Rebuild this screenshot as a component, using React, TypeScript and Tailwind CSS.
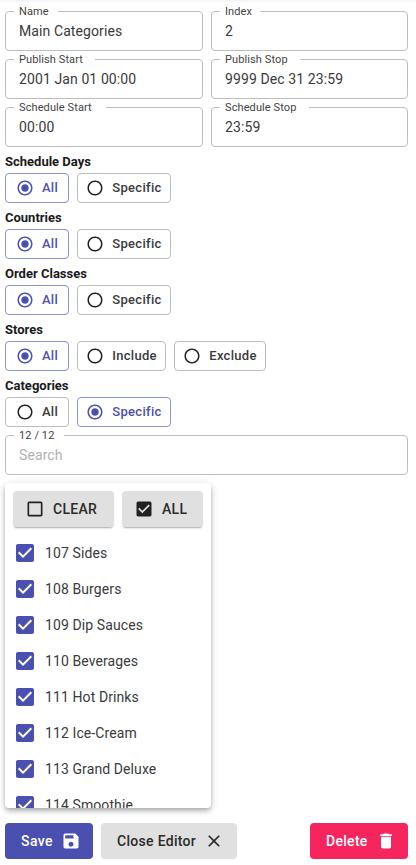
const ROBOTO = "font-['Roboto',sans-serif]";

const Icon = ({ d, className }: { d: string; className: string }) => (
  <svg viewBox="0 0 24 24" className={className} fill="currentColor">
    <path d={d} />
  </svg>
);

const RADIO_OFF =
  'M12 2C6.48 2 2 6.48 2 12s4.48 10 10 10 10-4.48 10-10S17.52 2 12 2zm0 18c-4.42 0-8-3.58-8-8s3.58-8 8-8 8 3.58 8 8-3.58 8-8 8z';
const RADIO_ON =
  'M12 7c-2.76 0-5 2.24-5 5s2.24 5 5 5 5-2.24 5-5-2.24-5-5-5zm0-5C6.48 2 2 6.48 2 12s4.48 10 10 10 10-4.48 10-10S17.52 2 12 2zm0 18c-4.42 0-8-3.58-8-8s3.58-8 8-8 8 3.58 8 8-3.58 8-8 8z';
const CHECKED =
  'M19 3H5c-1.11 0-2 .9-2 2v14c0 1.1.89 2 2 2h14c1.11 0 2-.9 2-2V5c0-1.1-.89-2-2-2zm-9 14l-5-5 1.41-1.41L10 14.17l7.59-7.59L19 8l-9 9z';
const UNCHECKED =
  'M19 5v14H5V5h14m0-2H5c-1.1 0-2 .9-2 2v14c0 1.1.9 2 2 2h14c1.1 0 2-.9 2-2V5c0-1.1-.9-2-2-2z';
const SAVE =
  'M17 3H5c-1.11 0-2 .9-2 2v14c0 1.1.89 2 2 2h14c1.1 0 2-.9 2-2V7l-4-4zm-5 16c-1.66 0-3-1.34-3-3s1.34-3 3-3 3 1.34 3 3-1.34 3-3 3zm3-10H5V5h10v4z';
const CLOSE =
  'M19 6.41L17.59 5 12 10.59 6.41 5 5 6.41 10.59 12 5 17.59 6.41 19 12 13.41 17.59 19 19 17.59 13.41 12z';
const DELETE =
  'M6 19c0 1.1.9 2 2 2h8c1.1 0 2-.9 2-2V7H6v12zM19 4h-3.5l-1-1h-5l-1 1H5v2h14V4z';

const Field = ({
  label,
  value,
  placeholder,
  notch,
  className,
}: {
  label: string;
  value?: string;
  placeholder?: string;
  notch: string;
  className?: string;
}) => (
  <div className={`relative h-10 rounded border border-[#bdbdbd] px-[13px] flex items-center ${className ?? ''}`}>
    <span className={`absolute left-[8px] -top-[7px] bg-white pl-[5px] text-[11px] tracking-[0.1px] leading-[13px] text-[#424242] ${notch}`}>
      {label}
    </span>
    <span className={`text-[14px] tracking-[0.1px] pt-[1px] ${placeholder ? 'text-[#b0b0b0]' : 'text-[#3a3a3a]'}`}>
      {value ?? placeholder}
    </span>
  </div>
);

const Toggle = ({ label, active, width }: { label: string; active?: boolean; width: string }) => (
  <div
    className={`h-[30px] rounded border flex items-center justify-center gap-2 text-[13px] font-medium tracking-[0.3px] ${width} ${
      active ? 'border-[#8c93d8] text-[#4a50b0]' : 'border-[#bdbdbd] text-[#3a3a3a]'
    }`}
  >
    <Icon d={active ? RADIO_ON : RADIO_OFF} className={`w-[18px] h-[18px] shrink-0 ${active ? 'text-[#4a50b0]' : 'text-[#212121]'}`} />
    <span>{label}</span>
  </div>
);

const Group = ({ title, children }: { title: string; children: React.ReactNode }) => (
  <div className="h-[56px]">
    <div className="h-[21px] text-[13px] font-bold leading-[20px] text-[#1a1a1a]">{title}</div>
    <div className="flex gap-2">{children}</div>
  </div>
);

const ITEMS = [
  '107 Sides',
  '108 Burgers',
  '109 Dip Sauces',
  '110 Beverages',
  '111 Hot Drinks',
  '112 Ice-Cream',
  '113 Grand Deluxe',
  '114 Smoothie',
];

export default function App() {
  return (
    <div className={`w-[416px] h-[865px] overflow-hidden bg-white relative pl-[5px] pr-[8px] pt-[11px] ${ROBOTO}`}>
      <div className="absolute inset-x-0 top-0 h-[3px] bg-gradient-to-b from-[#f2f2f2] to-white" />
      <div className="grid grid-cols-[198px_197px] gap-x-2 gap-y-2">
        <Field label="Name" value="Main Categories" notch="pr-[9px]" />
        <Field label="Index" value="2" notch="pr-[8px]" />
        <Field label="Publish Start" value="2001 Jan 01 00:00" notch="pr-[12px]" />
        <Field label="Publish Stop" value="9999 Dec 31 23:59" notch="pr-[12px]" />
        <Field label="Schedule Start" value="00:00" notch="pr-[14px]" />
        <Field label="Schedule Stop" value="23:59" notch="pr-[13px]" />
      </div>

      <div className="mt-[5px]">
        <Group title="Schedule Days">
          <Toggle label="All" active width="w-[64px]" />
          <Toggle label="Specific" width="w-[94px]" />
        </Group>
        <Group title="Countries">
          <Toggle label="All" active width="w-[64px]" />
          <Toggle label="Specific" width="w-[94px]" />
        </Group>
        <Group title="Order Classes">
          <Toggle label="All" active width="w-[64px]" />
          <Toggle label="Specific" width="w-[94px]" />
        </Group>
        <Group title="Stores">
          <Toggle label="All" active width="w-[64px]" />
          <Toggle label="Include" width="w-[89px]" />
          <Toggle label="Exclude" width="w-[92px]" />
        </Group>
        <Group title="Categories">
          <Toggle label="All" width="w-[64px]" />
          <Toggle label="Specific" active width="w-[94px]" />
        </Group>
      </div>

      <Field label="12 / 12" placeholder="Search" notch="pr-[10px]" className="mt-[3px] w-[403px]" />

      <div className="mt-[8px] w-[206px] h-[325px] overflow-hidden rounded bg-white shadow-[0_2px_4px_-1px_rgba(0,0,0,0.2),0_4px_5px_0_rgba(0,0,0,0.14),0_1px_10px_0_rgba(0,0,0,0.12)]">
        <div className="flex gap-2 pt-2 pl-2">
          <div className="w-[101px] h-9 rounded bg-[#e0e0e0] shadow-[0_2px_2px_-1px_rgba(0,0,0,0.35)] flex items-center pl-[12px] gap-2 text-[14px] font-medium tracking-[0.3px] text-[#2b2b2b]">
            <Icon d={UNCHECKED} className="w-[20px] h-[20px] text-[#212121]" />
            <span>CLEAR</span>
          </div>
          <div className="w-[81px] h-9 rounded bg-[#e0e0e0] shadow-[0_2px_2px_-1px_rgba(0,0,0,0.35)] flex items-center pl-[12px] gap-2 text-[14px] font-medium tracking-[0.3px] text-[#2b2b2b]">
            <Icon d={CHECKED} className="w-[20px] h-[20px] text-[#212121]" />
            <span>ALL</span>
          </div>
        </div>
        <div className="mt-2">
          {ITEMS.map((item) => (
            <div key={item} className="h-9 flex items-center pl-[8px] gap-2 text-[14px] tracking-[0.1px] text-[#3a3a3a]">
              <Icon d={CHECKED} className="w-6 h-6 shrink-0 text-[#4a50b0]" />
              <span>{item}</span>
            </div>
          ))}
        </div>
      </div>

      <div className="mt-[15px] flex gap-2">
        <div className="w-[88px] h-9 rounded bg-[#4a50b0] text-white flex items-center pl-4 gap-2 text-[14px] font-medium tracking-[0.4px]">
          <span>Save</span>
          <Icon d={SAVE} className="w-[20px] h-[20px]" />
        </div>
        <div className="w-[136px] h-9 rounded bg-[#e0e0e0] text-[#2b2b2b] flex items-center pl-4 gap-2 text-[14px] font-medium tracking-[0.3px]">
          <span>Close Editor</span>
          <Icon d={CLOSE} className="w-[20px] h-[20px]" />
        </div>
        <div className="ml-auto w-[98px] h-9 rounded bg-[#f6255e] text-white flex items-center pl-4 gap-2 text-[14px] font-medium tracking-[0.3px]">
          <span>Delete</span>
          <Icon d={DELETE} className="w-[20px] h-[20px]" />
        </div>
      </div>
    </div>
  );
}
